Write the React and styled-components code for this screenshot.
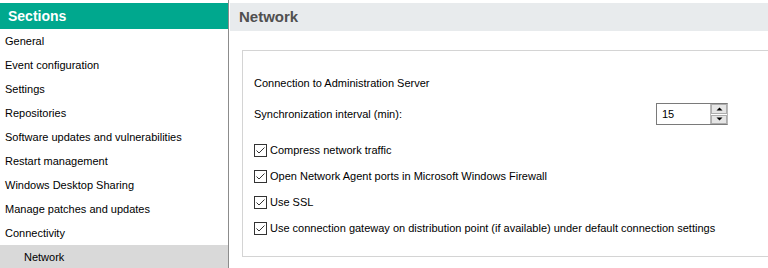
import React from 'react'
import styled, { createGlobalStyle } from 'styled-components'

const GlobalStyle = createGlobalStyle`
  body {
    margin: 0;
    background: #fff;
    font-family: 'Liberation Sans', Arial, sans-serif;
    font-size: 11px;
    color: #000;
  }
`

const Page = styled.div`
  display: flex;
  width: 768px;
  height: 268px;
  overflow: hidden;
`

const Sidebar = styled.div`
  width: 228px;
  flex: none;
  padding-top: 3px;
  border-right: 1px solid #8c8c8c;
`

const SidebarHeader = styled.div`
  height: 26px;
  background: #00a88e;
  color: #fff;
  font-weight: bold;
  font-size: 14px;
  line-height: 26px;
  padding-left: 8px;
`

const NavItem = styled.div`
  height: 24px;
  line-height: 24px;
  padding-left: ${p => (p.$sub ? '24px' : '5px')};
  background: ${p => (p.$active ? '#d9d9d9' : 'transparent')};
`

const Main = styled.div`
  flex: 1;
  padding: 3px 0 0 1px;
`

const MainHeader = styled.div`
  height: 28px;
  line-height: 28px;
  background: #e8ebed;
  color: #505050;
  font-weight: bold;
  font-size: 15px;
  padding-left: 9px;
`

const Group = styled.div`
  margin: 19px 0 0 12px;
  width: 560px;
  border: 1px solid #d4d4d4;
  padding: 20px 0 15px 11px;
  display: flex;
  flex-direction: column;
`

const GroupTitle = styled.div`
  height: 24px;
  line-height: 24px;
`

const FieldRow = styled.div`
  display: flex;
  align-items: center;
  justify-content: space-between;
  width: 474px;
  height: 22px;
  margin: 8px 0 12px;
`

const Spinner = styled.div`
  display: flex;
  width: 72px;
  height: 22px;
  box-sizing: border-box;
  border: 1px solid #7a7a7a;
  border-right-color: #b9b9b9;
`

const SpinValue = styled.div`
  flex: 1;
  padding-left: 5px;
  line-height: 20px;
`

const SpinButtons = styled.div`
  width: 17px;
  display: flex;
  flex-direction: column;
  gap: 1px;
  border-left: 1px solid #b9b9b9;
  box-sizing: border-box;
`

const SpinButton = styled.div`
  flex: 1;
  display: flex;
  align-items: center;
  justify-content: center;
  background: #e5e5e5;
  border: 1px solid #adadad;
`

const CheckRow = styled.label`
  display: flex;
  align-items: center;
  height: 26px;
  gap: 3px;
`

const Box = styled.span`
  width: 13px;
  height: 13px;
  box-sizing: border-box;
  border: 1px solid #333;
  background: #fff;
  display: flex;
  align-items: center;
  justify-content: center;
`

const Checkbox = ({ children }) => (
  <CheckRow>
    <Box>
      <svg width="11" height="11" viewBox="0 0 11 11">
        <path d="M1.5 5.5 L4 8 L9.5 2.5" fill="none" stroke="#333" strokeWidth="1" />
      </svg>
    </Box>
    {children}
  </CheckRow>
)

const Arrow = ({ up }) => (
  <svg width="7" height="4" viewBox="0 0 7 4">
    <path d={up ? 'M0.5 3.5 L3.5 0.5 L6.5 3.5 Z' : 'M0.5 0.5 L3.5 3.5 L6.5 0.5 Z'} fill="#000" />
  </svg>
)

const sections = [
  'General',
  'Event configuration',
  'Settings',
  'Repositories',
  'Software updates and vulnerabilities',
  'Restart management',
  'Windows Desktop Sharing',
  'Manage patches and updates',
  'Connectivity'
]

const App = () => (
  <>
    <GlobalStyle />
    <Page>
      <Sidebar>
        <SidebarHeader>Sections</SidebarHeader>
        {sections.map(s => (
          <NavItem key={s}>{s}</NavItem>
        ))}
        <NavItem $sub $active>Network</NavItem>
      </Sidebar>
      <Main>
        <MainHeader>Network</MainHeader>
        <Group>
          <GroupTitle>Connection to Administration Server</GroupTitle>
          <FieldRow>
            <span>Synchronization interval (min):</span>
            <Spinner>
              <SpinValue>15</SpinValue>
              <SpinButtons>
                <SpinButton><Arrow up /></SpinButton>
                <SpinButton><Arrow /></SpinButton>
              </SpinButtons>
            </Spinner>
          </FieldRow>
          <Checkbox>Compress network traffic</Checkbox>
          <Checkbox>Open Network Agent ports in Microsoft Windows Firewall</Checkbox>
          <Checkbox>Use SSL</Checkbox>
          <Checkbox>Use connection gateway on distribution point (if available) under default connection settings</Checkbox>
        </Group>
      </Main>
    </Page>
  </>
)

export default App
